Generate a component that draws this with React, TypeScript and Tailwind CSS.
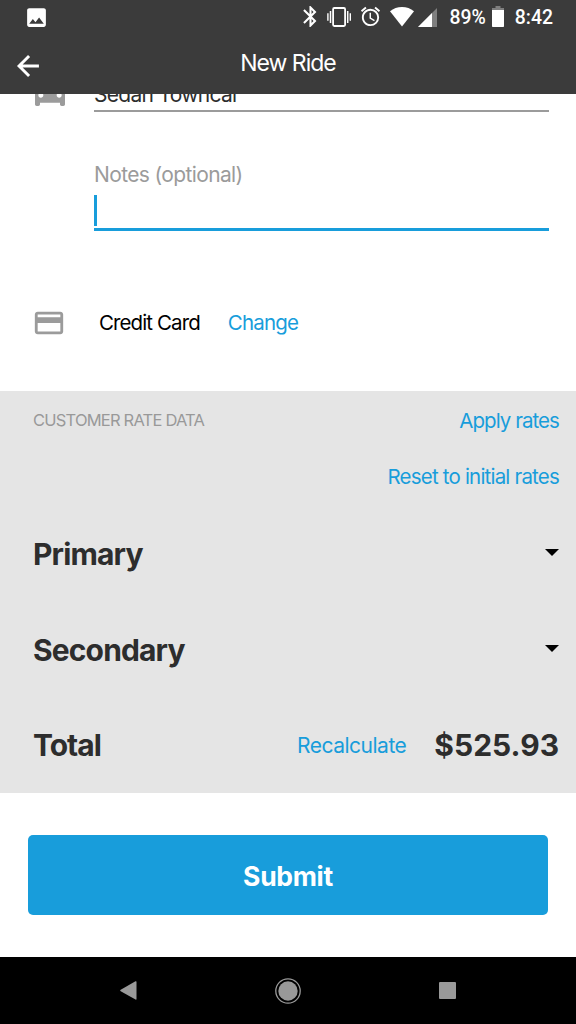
import { useState, type FC } from "react";
import { MdAlarm, MdBluetooth, MdCreditCard, MdDirectionsCar, MdImage } from "react-icons/md";

const BackIcon: FC = () => (
  <svg viewBox="0 0 24 24" className="h-8 w-8" fill="none" stroke="currentColor" strokeWidth="2.2">
    <path d="M20.2 12H5.400M12.800 4.500 5.300 12l7.500 7.500" />
  </svg>
);

const VibrateIcon: FC = () => (
  <svg viewBox="0 0 24 20" className="ml-[11px] h-5 w-6 shrink-0" fill="none" stroke="currentColor">
    <rect x="6.1" y="1" width="12" height="18" rx="1.2" strokeWidth="1.8" />
    <path d="M3.5 4v12M20.7 4v12" strokeWidth="1.5" />
    <path d="M.9 6.2v7.6M23.3 6.2v7.6" strokeWidth="1.4" />
  </svg>
);

const WifiIcon: FC = () => (
  <svg viewBox="0 0 24 20" className="ml-2 h-5 w-6 shrink-0" fill="currentColor">
    <path d="M12 19.4 0 4.2C3.4 1.5 7.5 0 12 0s8.6 1.5 12 4.2z" />
  </svg>
);

const SignalIcon: FC = () => (
  <svg viewBox="0 0 19 19" className="mt-0.5 ml-1 h-[19px] w-[19px] shrink-0" fill="currentColor">
    <path d="M19 0v19H0z" opacity=".35" />
    <path d="M14 5v14H0z" />
  </svg>
);

const BatteryIcon: FC = () => (
  <svg viewBox="0 0 12 21" className="ml-[6px] h-[21px] w-3 shrink-0" fill="currentColor">
    <path d="M3.5 0h5v2H12v2H0V2h3.5z" opacity=".35" />
    <path d="M0 4h12v16.2a.8.8 0 0 1-.8.8H.8a.8.8 0 0 1-.8-.8z" />
  </svg>
);

const RATE_GROUPS = ["Primary", "Secondary"];

const App: FC = () => {
  const [notes, setNotes] = useState("");

  return (
    <div className="flex h-[1024px] w-[576px] flex-col overflow-hidden bg-white font-['Inter','Liberation_Sans',sans-serif] text-[#2d2d2d]">
      {/* status bar + title */}
      <header className="h-[94px] shrink-0 bg-[#3b3b3b] text-white">
        <div className="flex h-[34px] items-center pr-[23px] pl-6">
          <MdImage className="h-[25px] w-[25px]" />
          <div className="ml-auto flex items-center font-['Roboto',sans-serif] text-[19.4px] font-medium">
            <MdBluetooth className="-mr-[7px] h-[25px] w-[25px] shrink-0" />
            <VibrateIcon />
            <MdAlarm className="ml-2 h-[23px] w-[23px] shrink-0" />
            <WifiIcon />
            <SignalIcon />
            <span className="ml-3 pt-0.5">89%</span>
            <BatteryIcon />
            <span className="ml-[11px] pt-0.5">8:42</span>
          </div>
        </div>
        <div className="grid h-[60px] grid-cols-[1fr_auto_1fr] items-center px-3">
          <button className="w-8 pt-1">
            <BackIcon />
          </button>
          <h1 className="pb-0.5 text-[23px] tracking-[-1px]">New Ride</h1>
        </div>
      </header>

      {/* scrolled form */}
      <main className="h-[863px] shrink-0 overflow-hidden">
        <div className="-mt-6 flex h-[42px] pr-[27px] pl-[30px]">
          <MdDirectionsCar className="mt-px h-10 w-10 text-[#9b9b9b]" />
          <div className="ml-6 flex-1 border-b-2 border-[#9b9b9b] pt-[9px] text-[21px] leading-[31px] tracking-[-0.7px]">
            Sedan Towncar
          </div>
        </div>

        <label className="mt-[49px] mr-[27px] ml-[94px] block h-[70px] border-b-[3px] border-[#189ddb]">
          <span className="block text-[21px] leading-7 tracking-[-0.63px] text-[#9b9b9b]">Notes (optional)</span>
          <div className="mt-1.5 flex h-[31px] items-center">
            <span className="h-full w-[3px] bg-[#189ddb]" />
            <input
              className="h-full flex-1 text-[21px] outline-none"
              value={notes}
              onChange={(e) => setNotes(e.target.value)}
            />
          </div>
        </label>

        <div className="mt-[76px] flex h-8 items-center pl-8 text-[20.5px]">
          <MdCreditCard className="h-[34px] w-[34px] text-[#9b9b9b]" />
          <span className="ml-[33px] tracking-[-0.9px] text-black">Credit Card</span>
          <button className="ml-7 tracking-[-0.8px] text-[#189ddb]">Change</button>
        </div>

        <section className="mt-[52px] h-[402px] bg-[#e5e5e5] pr-[17px] pl-[33px]">
          <div className="flex h-[58px] items-center justify-between">
            <h2 className="text-[16.5px] tracking-[-0.8px] text-[#999999]">CUSTOMER RATE DATA</h2>
            <button className="pt-[3px] text-[20.5px] tracking-[-0.95px] text-[#189ddb]">Apply rates</button>
          </div>
          <div className="flex h-[57px] items-center justify-end">
            <button className="text-[20.5px] tracking-[-0.8px] text-[#189ddb]">Reset to initial rates</button>
          </div>
          {RATE_GROUPS.map((group) => (
            <div key={group} className="flex h-24 items-center justify-between">
              <span className="text-[30px] font-bold tracking-[-0.85px]">{group}</span>
              <svg viewBox="0 0 14 7" className="mb-1 h-[7px] w-3.5" fill="#000">
                <path d="M0 0h14L7 7z" />
              </svg>
            </div>
          ))}
          <div className="flex h-[95px] items-center">
            <span className="text-[30px] font-bold tracking-[-1px]">Total</span>
            <button className="ml-auto text-[21px] tracking-[-0.5px] text-[#189ddb]">Recalculate</button>
            <span className="ml-7 text-[30px] font-bold">$525.93</span>
          </div>
        </section>

        <button className="mt-[42px] ml-7 block h-20 w-[520px] rounded-[5px] bg-[#189ddb] pt-1 text-[26.5px] font-bold tracking-[-0.3px] text-white">
          Submit
        </button>
      </main>

      {/* android navigation bar */}
      <nav className="flex h-[67px] shrink-0 items-center bg-black pl-[120px] text-[#999999]">
        <svg viewBox="0 0 17 19" className="h-[19px] w-[17px]" fill="currentColor">
          <path d="M15.5.3Q16.5 0 16.5 1v17q0 1-1 .6L.7 10.2q-1-.7 0-1.4z" />
        </svg>
        <svg viewBox="0 0 26 26" className="ml-[138px] h-[26px] w-[26px]">
          <circle cx="13" cy="13" r="12.2" fill="none" stroke="currentColor" strokeWidth="1.3" />
          <circle cx="13" cy="13" r="9.7" fill="currentColor" />
        </svg>
        <span className="ml-[138px] h-[17px] w-[17px] rounded-[1px] bg-[#999999]" />
      </nav>
    </div>
  );
};

export default App;
